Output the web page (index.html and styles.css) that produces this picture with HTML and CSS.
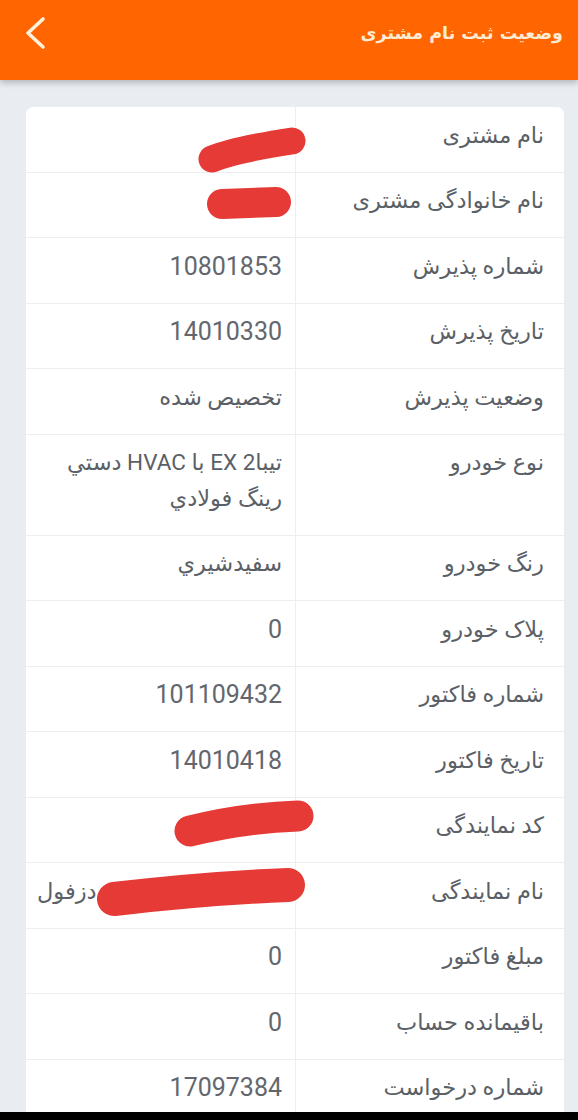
FILE: index.html
```html
<!DOCTYPE html>
<html lang="fa">
<head>
<meta charset="utf-8">
<title>وضعیت ثبت نام مشتری</title>
<link rel="stylesheet" href="styles.css">
</head>
<body>
<div class="screen">
  <header class="appbar">
    <h1 class="title">وضعیت ثبت نام مشتری</h1>
    <svg class="back" width="24" height="34" viewBox="0 0 24 34"><path d="M19 3 L4 17 L19 31" fill="none" stroke="#fff1dc" stroke-width="3.6" stroke-linecap="round" stroke-linejoin="round"/></svg>
  </header>
  <main class="content">
    <div class="card">
      <div class="grid">
        <div class="cell label">نام مشتری</div><div class="cell value"></div>
        <div class="cell label">نام خانوادگی مشتری</div><div class="cell value"></div>
        <div class="cell label">شماره پذیرش</div><div class="cell value num">10801853</div>
        <div class="cell label">تاریخ پذیرش</div><div class="cell value num">14010330</div>
        <div class="cell label">وضعیت پذیرش</div><div class="cell value">تخصیص شده</div>
        <div class="cell label">نوع خودرو</div><div class="cell value">تیبا2 EX با HVAC دستي رينگ فولادي</div>
        <div class="cell label">رنگ خودرو</div><div class="cell value">سفیدشيري</div>
        <div class="cell label">پلاک خودرو</div><div class="cell value num">0</div>
        <div class="cell label">شماره فاکتور</div><div class="cell value num">101109432</div>
        <div class="cell label">تاریخ فاکتور</div><div class="cell value num">14010418</div>
        <div class="cell label">کد نمایندگی</div><div class="cell value"></div>
        <div class="cell label">نام نمایندگی</div><div class="cell value far">دزفول</div>
        <div class="cell label">مبلغ فاکتور</div><div class="cell value num">0</div>
        <div class="cell label">باقیمانده حساب</div><div class="cell value num">0</div>
        <div class="cell label">شماره درخواست</div><div class="cell value num">17097384</div>
        <div class="cell label">&nbsp;</div><div class="cell value"></div>
      </div>
      <svg class="scribbles" width="538" height="1010" viewBox="0 0 538 1010">
        <g fill="none" stroke="#e53a35" stroke-linecap="round" stroke-linejoin="round">
          <path d="M186 52 C205 44 240 38 266 34" stroke-width="27"/>
          <path d="M196 97 L250 95" stroke-width="30"/>
          <path d="M164 724 C200 715 240 710 272 709" stroke-width="31"/>
          <path d="M88 792 C140 786 210 780 262 778" stroke-width="34"/>
        </g>
      </svg>
    </div>
  </main>
  <div class="navbar"></div>
</div>
</body>
</html>
```
FILE: styles.css
```css
html, body {
  margin: 0;
  padding: 0;
}
body {
  width: 578px;
  height: 1120px;
  overflow: hidden;
  background: #e9ecf1;
  font-family: Roboto, "DejaVu Sans", sans-serif;
}
.screen {
  display: flex;
  flex-direction: column;
  height: 1120px;
}
.appbar {
  flex: 0 0 80px;
  height: 80px;
  background: #ff6500;
  display: flex;
  flex-direction: row-reverse;
  align-items: center;
  justify-content: space-between;
  padding: 0 15px 14px 24px;
  box-sizing: border-box;
  box-shadow: 0 3px 6px rgba(0, 0, 0, 0.22);
  position: relative;
  z-index: 2;
}
.title {
  margin: 0;
  font-family: "DejaVu Sans", sans-serif;
  font-size: 17.5px;
  font-weight: bold;
  color: #fdebd3;
  direction: rtl;
}
.back {
  display: block;
}
.content {
  flex: 1 1 auto;
  overflow: hidden;
  padding: 27px 14px 0 26px;
}
.card {
  position: relative;
  background: #ffffff;
  border-radius: 7px 7px 0 0;
  width: 538px;
  min-height: 1100px;
}
.grid {
  display: grid;
  grid-template-columns: 1fr 1fr;
  direction: rtl;
}
.cell {
  padding: 10.5px 0 18.5px;
  line-height: 35.5px;
  border-bottom: 1px solid #eceef1;
  font-size: 22.5px;
  color: #5b5f66;
  text-align: right;
}
.label {
  padding-right: 20px;
  border-left: 1px solid #eceef1;
}
.value {
  padding-right: 13px;
  padding-left: 10px;
}
.num {
  font-size: 25px;
  color: #63676d;
}
.far {
  text-align: left;
  padding-left: 11px;
}
.scribbles {
  position: absolute;
  left: 0;
  top: 0;
  pointer-events: none;
}
.navbar {
  flex: 0 0 8px;
  background: #000000;
}
```
